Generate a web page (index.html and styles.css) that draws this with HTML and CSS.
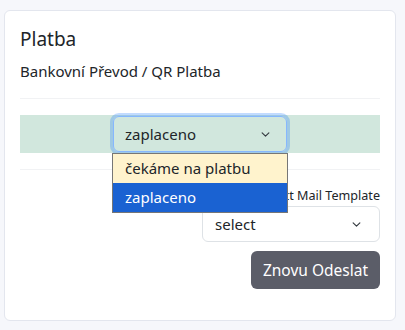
FILE: index.html
```html
<!DOCTYPE html>
<html lang="cs">
<head>
<meta charset="utf-8">
<title>Platba</title>
<link rel="stylesheet" href="styles.css">
</head>
<body>
<div class="page">
  <div class="card">
    <h5 class="card-title">Platba</h5>
    <p class="card-subtitle">Bankovní Převod / QR Platba</p>
    <hr class="divider">
    <div class="status-row">
      <div class="select-wrap">
        <div class="status-select">
          <span>zaplaceno</span>
          <svg class="chev" width="13" height="9" viewBox="0 0 16 16"><path d="M2 5l6 6 6-6" fill="none" stroke="#343a40" stroke-width="2" stroke-linecap="round" stroke-linejoin="round"/></svg>
        </div>
        <ul class="dropdown">
          <li class="opt opt-warn">čekáme na platbu</li>
          <li class="opt opt-sel">zaplaceno</li>
        </ul>
      </div>
    </div>
    <hr class="divider">
    <div class="mail">
      <label class="mail-label">Select Mail Template</label>
      <div class="mail-select">
        <span>select</span>
        <svg class="chev" width="13" height="9" viewBox="0 0 16 16"><path d="M2 5l6 6 6-6" fill="none" stroke="#343a40" stroke-width="2" stroke-linecap="round" stroke-linejoin="round"/></svg>
      </div>
      <button class="btn">Znovu Odeslat</button>
    </div>
  </div>
</div>
</body>
</html>
```
FILE: styles.css
```css
html, body {
  margin: 0;
  padding: 0;
}
body {
  background: #f6f7fb;
  font-family: "Noto Sans", "Open Sans", sans-serif;
  color: #212529;
}
.page {
  padding: 10px 9px 9px 4px;
}
.card {
  background: #fff;
  border: 1px solid #e3e6ee;
  border-radius: 6px;
  padding: 16px 15px 31px 15px;
}
.card-title {
  margin: 0 0 8px;
  font-size: 19px;
  font-weight: 400;
  line-height: 24px;
}
.card-subtitle {
  margin: 0 0 15px;
  font-size: 15px;
  line-height: 24px;
}
.divider {
  margin: 0;
  border: 0;
  border-top: 1px solid #f1f2f4;
}
.status-row {
  margin: 16px 0;
  background: #d1e7dd;
  height: 38px;
  display: flex;
  justify-content: center;
  align-items: center;
}
.select-wrap {
  position: relative;
  width: 174px;
}
.status-select {
  box-sizing: border-box;
  height: 36px;
  border: 1px solid #86b7fe;
  border-radius: 6px;
  box-shadow: 0 0 0 3px rgba(13, 110, 253, 0.25);
  display: flex;
  align-items: center;
  justify-content: space-between;
  padding: 0 14px 0 11px;
  font-size: 15px;
}
.dropdown {
  position: absolute;
  left: -1px;
  top: 37px;
  width: 176px;
  margin: 0;
  padding: 0;
  list-style: none;
  border: 1px solid #767676;
  box-sizing: border-box;
  z-index: 2;
  font-size: 15px;
}
.opt {
  height: 29px;
  line-height: 29px;
  padding-left: 12px;
}
.opt-warn {
  background: #fff3cd;
}
.opt-sel {
  background: #1a62d2;
  color: #fff;
}
.mail {
  display: flex;
  flex-direction: column;
  align-items: flex-end;
  padding-top: 16px;
}
.mail-label {
  font-size: 12.6px;
  line-height: 20px;
}
.mail-select {
  box-sizing: border-box;
  width: 178px;
  height: 36px;
  border: 1px solid #dee2e6;
  border-radius: 6px;
  display: flex;
  align-items: center;
  justify-content: space-between;
  padding: 0 16px 0 12px;
  font-size: 15px;
}
.btn {
  margin-top: 9px;
  height: 38px;
  padding: 0 12px;
  border: 0;
  border-radius: 6px;
  background: #5b5d68;
  color: #fff;
  font-family: inherit;
  font-size: 15.5px;
}
```
